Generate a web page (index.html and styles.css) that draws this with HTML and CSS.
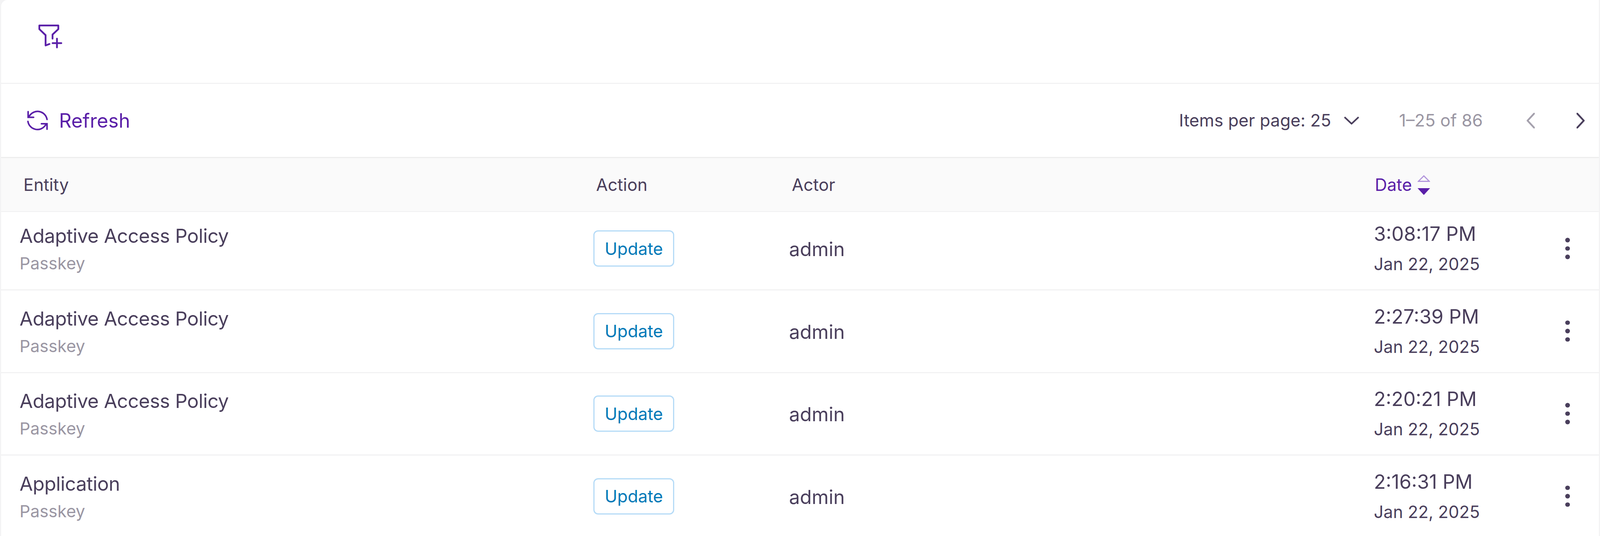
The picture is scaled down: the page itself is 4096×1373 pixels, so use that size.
FILE: index.html
```html
<!DOCTYPE html>
<html lang="en">
<head>
<meta charset="utf-8">
<title>Audit log</title>
<link rel="stylesheet" href="styles.css">
</head>
<body>
<main class="card">
  <section class="filters">
    <svg class="icon-filter" viewBox="98 62 62 62" width="62" height="62" aria-hidden="true">
      <path d="M100.7 65.3H149.3V74.7L134.5 88.5V99M100.7 65.3V74.7L116.7 90V116.5L126.7 112.7M134.6 110.4H157M145.8 99V121.5"/>
    </svg>
  </section>
  <section class="toolbar">
    <button class="refresh">
      <svg class="icon-refresh" viewBox="68 278 56 60" width="56" height="60" aria-hidden="true">
        <path d="M120.4 305A24.5 24.5 0 0 0 76 295L72 299.5M72 285V299.5H86M71.5 310A24.5 24.5 0 0 0 116 320L120.4 316M106 316H120.4V330"/>
      </svg>
      <span>Refresh</span>
    </button>
    <div class="pager">
      <span class="per-page">Items per page: 25</span>
      <svg class="chev chev-down" viewBox="0 0 40 21" width="40" height="21" aria-hidden="true"><path d="M2 2L20 19L38 2"/></svg>
      <span class="range">1–25 of 86</span>
      <svg class="chev chev-prev" viewBox="0 0 21 40" width="21" height="40" aria-hidden="true"><path d="M22 -1L2.5 20L22 41"/></svg>
      <svg class="chev chev-next" viewBox="0 0 21 40" width="21" height="40" aria-hidden="true"><path d="M-1 -1L18.5 20L-1 41"/></svg>
    </div>
  </section>
  <section class="table">
    <div class="head grid">
      <div class="th">Entity</div>
      <div class="th">Action</div>
      <div class="th">Actor</div>
      <div class="th th-date">Date
        <svg class="sort" viewBox="0 0 32 51" width="32" height="51" aria-hidden="true">
          <path class="sort-up" d="M16 2.5L30 16.5H2Z"/>
          <path class="sort-down" d="M0 34H32L16 51.5Z"/>
        </svg>
      </div>
      <div></div>
    </div>
    <div class="row grid">
      <div class="entity"><div class="name">Adaptive Access Policy</div><div class="sub">Passkey</div></div>
      <div><span class="badge">Update</span></div>
      <div class="actor">admin</div>
      <div class="when"><div class="time">3:08:17 PM</div><div class="day">Jan 22, 2025</div></div>
      <div class="kebab"><i></i><i></i><i></i></div>
    </div>
    <div class="row grid">
      <div class="entity"><div class="name">Adaptive Access Policy</div><div class="sub">Passkey</div></div>
      <div><span class="badge">Update</span></div>
      <div class="actor">admin</div>
      <div class="when"><div class="time">2:27:39 PM</div><div class="day">Jan 22, 2025</div></div>
      <div class="kebab"><i></i><i></i><i></i></div>
    </div>
    <div class="row grid">
      <div class="entity"><div class="name">Adaptive Access Policy</div><div class="sub">Passkey</div></div>
      <div><span class="badge">Update</span></div>
      <div class="actor">admin</div>
      <div class="when"><div class="time">2:20:21 PM</div><div class="day">Jan 22, 2025</div></div>
      <div class="kebab"><i></i><i></i><i></i></div>
    </div>
    <div class="row grid">
      <div class="entity"><div class="name">Application</div><div class="sub">Passkey</div></div>
      <div><span class="badge">Update</span></div>
      <div class="actor">admin</div>
      <div class="when"><div class="time">2:16:31 PM</div><div class="day">Jan 22, 2025</div></div>
      <div class="kebab"><i></i><i></i><i></i></div>
    </div>
  </section>
</main>
</body>
</html>
```
FILE: styles.css
```css
* { box-sizing: border-box; }
html, body { margin: 0; height: 1373px; overflow: hidden; }
body {
  background: #f3f3f4;
  padding: 0 3px;
  font-family: Inter, "Liberation Sans", sans-serif;
  color: #4a3f5c;
}
.card { background: #fff; height: 1373px; border-radius: 16px 0 0 0; overflow: hidden; }
svg { display: block; fill: none; }

.filters { height: 215px; border-bottom: 3px solid #f2f2f3; padding: 62px 0 0 95px; }
.icon-filter { stroke: #5a1fa8; stroke-width: 4.5; stroke-linecap: round; stroke-linejoin: round; }

.toolbar {
  height: 190px;
  border-bottom: 3px solid #eeeeee;
  display: flex;
  align-items: center;
  justify-content: space-between;
}
.refresh {
  display: flex; align-items: center; gap: 27px;
  margin: 0 0 0 65px; padding: 0; border: 0; background: none;
  font: 400 50px Inter, sans-serif; color: #5a1fa8;
}
.icon-refresh { stroke: #5a1fa8; stroke-width: 4; stroke-linecap: round; stroke-linejoin: miter; }
.pager { display: flex; align-items: center; font-size: 43.8px; }
.chev { stroke-width: 4.5; stroke-linejoin: round; }
.chev-down { stroke: #4a3f5c; stroke-width: 4; margin-left: 32px; margin-right: 102px; }
.range { color: #9a96a3; margin-right: 112px; }
.chev-prev { stroke: #a5a1ad; margin-right: 107px; }
.chev-next { stroke: #4a3f5c; margin-right: 36px; }

.grid { display: grid; grid-template-columns: 1516px 501px 1497px 490px 1fr; }
.head { height: 138px; background: #fafafa; border-bottom: 2px solid #f0f0f1; align-items: center; font-size: 43.5px; }
.th { padding-left: 7px; }
.th:first-child { padding-left: 57px; }
.th-date { display: flex; align-items: center; gap: 14px; padding-left: 2.5px; color: #5a1fa8; }
.sort { margin-top: 1px; }
.sort-up { stroke: #b296dc; stroke-width: 3; }
.sort-down { fill: #5a1fa8; }

.row { height: 211.5px; padding-top: 40.5px; border-bottom: 3px solid #f2f2f3; align-items: start; }
.row:nth-child(2) { height: 201px; padding-top: 30px; }
.entity { padding-left: 47px; }
.name { font-size: 49.5px; line-height: 62px; letter-spacing: -0.5px; }
.sub { font-size: 43px; line-height: 60px; margin-top: 9px; color: #9a96a3; }
.badge {
  display: inline-flex; align-items: center; justify-content: center;
  width: 207px; height: 93px; margin-top: 17px;
  border: 3px solid #b5dbf7; border-radius: 12px;
  font-size: 43.5px; color: #0079b8;
}
.actor { font-size: 49.5px; line-height: 62px; margin-top: 34px; }
.time { font-size: 50px; line-height: 62px; margin-top: -5px; }
.day { font-size: 43.4px; line-height: 60px; margin-top: 16px; }
.kebab { display: flex; flex-direction: column; gap: 10px; margin-top: 36px; }
.kebab i { display: block; width: 12px; height: 11.5px; border-radius: 50%; background: #4a3f5c; }
```
